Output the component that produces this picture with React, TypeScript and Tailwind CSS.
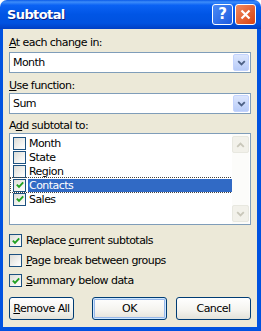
import React from "react";

const font = "font-['Tahoma','DejaVu_Sans',sans-serif] text-[11px] leading-[13px] tracking-[-0.55px] text-black";

const Check: React.FunctionComponent<{ checked?: boolean }> = ({ checked }) => (
  <span className="flex w-[13px] h-[13px] shrink-0 items-center justify-center border border-[#1C5180] bg-[linear-gradient(135deg,#DCDCD7_0%,#F6F6F4_70%,#FFFFFF_100%)]">
    {checked && (
      <svg width="8" height="8" viewBox="0 0 8 8">
        <path d="M0.8 3.6 L3 5.8 L7.2 1.4" stroke="#21A121" strokeWidth="1.9" fill="none" />
      </svg>
    )}
  </span>
);

const Chevron: React.FunctionComponent<{ up?: boolean; color: string }> = ({ up, color }) => (
  <svg width="9" height="6" viewBox="0 0 9 6" className={up ? "rotate-180" : ""}>
    <path d="M1.2 1.2 L4.5 4.5 L7.8 1.2" stroke={color} strokeWidth="1.8" fill="none" />
  </svg>
);

const Combo: React.FunctionComponent<{ value: string }> = ({ value }) => (
  <div className="flex h-[21px] items-center justify-between border border-[#7F9DB9] bg-white pl-[3px] pr-px">
    <span>{value}</span>
    <span className="flex w-[16px] h-[17px] items-center justify-center rounded-[2px] border border-[#C3D3FD] bg-[linear-gradient(to_bottom,#DCE6FD,#B8CCF8)]">
      <Chevron color="#4D6185" />
    </span>
  </div>
);

const Row: React.FunctionComponent<{ label: string; checked?: boolean; selected?: boolean }> = ({ label, checked, selected }) => (
  <div className={`flex h-[14px] items-center gap-[2px] pl-[2px] ${selected ? "outline outline-1 outline-dotted outline-[#444]" : ""}`}>
    <Check checked={checked} />
    <span className={`px-px ${selected ? "bg-[#316AC5] text-white w-full" : ""}`}>{label}</span>
  </div>
);

const Option: React.FunctionComponent<{ checked?: boolean; children: React.ReactNode }> = ({ checked, children }) => (
  <div className="flex h-[13px] items-center gap-[4px]">
    <Check checked={checked} />
    <span>{children}</span>
  </div>
);

const Button: React.FunctionComponent<{ children: React.ReactNode; width: string; def?: boolean }> = ({ children, width, def }) => (
  <div className={`flex h-[23px] ${width} items-center justify-center rounded-[3px] border border-[#003C74] bg-[linear-gradient(to_bottom,#FFFFFF_0%,#F4F3EE_60%,#E3E2DA_100%)] ${def ? "shadow-[inset_0_0_0_1px_#CEE7FF,inset_0_0_0_2px_#98B8EA]" : ""}`}>
    {children}
  </div>
);

export default function App() {
  return (
    <div className={`flex flex-col w-[261px] h-[331px] ${font}`}>
      <div className="flex h-[29px] shrink-0 items-center justify-between rounded-t-[7px] bg-[linear-gradient(to_bottom,#0A5AE8_0%,#3D8DF9_7%,#0A62F4_18%,#0055E5_50%,#0052E0_80%,#003FC4_100%)] pl-[7px] pr-[5px]">
        <span className="font-['DejaVu_Sans',sans-serif] text-[13px] font-bold tracking-[-0.6px] text-white [text-shadow:1px_1px_0_#0A1E82]">Subtotal</span>
        <div className="flex gap-[2px]">
          <span className="flex w-[21px] h-[21px] items-center justify-center rounded-[3px] border border-white bg-[linear-gradient(135deg,#4C8BF5,#1D5BE0)] font-['DejaVu_Sans',sans-serif] text-[15px] font-bold tracking-normal text-white">?</span>
          <span className="flex w-[21px] h-[21px] items-center justify-center rounded-[3px] border border-white bg-[linear-gradient(135deg,#F08A60,#D9410F)]">
            <svg width="11" height="11" viewBox="0 0 11 11">
              <path d="M1.5 1.5 L9.5 9.5 M9.5 1.5 L1.5 9.5" stroke="white" strokeWidth="2.2" />
            </svg>
          </span>
        </div>
      </div>
      <div className="flex flex-1 flex-col border-l-[3px] border-r-[4px] border-b-[4px] border-[#0052E0] bg-[#ECE9D8] px-[6px]">
        <div className="mt-[7px] h-[13px]"><u>A</u>t each change in:</div>
        <div className="mt-[3px]"><Combo value="Month" /></div>
        <div className="mt-[6px] h-[13px]"><u>U</u>se function:</div>
        <div className="mt-[1px]"><Combo value="Sum" /></div>
        <div className="mt-[5px] h-[13px]">A<u>d</u>d subtotal to:</div>
        <div className="mt-[1px] flex h-[92px] border border-[#7F9DB9] bg-white">
          <div className="flex flex-1 flex-col pt-[2px] pl-px">
            <Row label="Month" />
            <Row label="State" />
            <Row label="Region" />
            <Row label="Contacts" checked selected />
            <Row label="Sales" checked />
          </div>
          <div className="flex w-[17px] flex-col justify-between bg-[#FCFCFA] pt-[2px] pb-[2px] mr-px">
            <span className="flex h-[17px] items-center justify-center rounded-[2px] border border-[#E8E8E0] bg-[#F2F1EA]"><Chevron up color="#C9C7BA" /></span>
            <span className="flex h-[17px] items-center justify-center rounded-[2px] border border-[#E8E8E0] bg-[#F2F1EA]"><Chevron color="#C9C7BA" /></span>
          </div>
        </div>
        <div className="mt-[9px] flex flex-col gap-[7px]">
          <Option checked>Replace <u>c</u>urrent subtotals</Option>
          <Option><u>P</u>age break between groups</Option>
          <Option checked><u>S</u>ummary below data</Option>
        </div>
        <div className="mt-[10px] flex">
          <Button width="w-[66px]"><span><u>R</u>emove All</span></Button>
          <div className="ml-[18px]"><Button width="w-[75px]" def>OK</Button></div>
          <div className="ml-[9px]"><Button width="w-[75px]">Cancel</Button></div>
        </div>
      </div>
    </div>
  );
}
